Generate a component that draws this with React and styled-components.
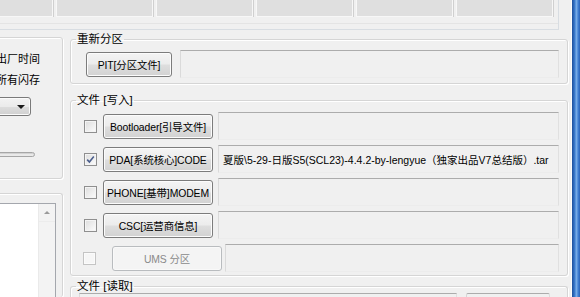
import React from 'react'
import styled, {createGlobalStyle} from 'styled-components'

const GlobalStyle = createGlobalStyle`
  html, body {
    margin: 0;
    padding: 0;
    background: #f0f0f0;
  }
  body {
    font-family: "Liberation Sans", "Noto Sans CJK SC", sans-serif;
    font-size: 11px;
    color: #000;
  }
`;

const Window = styled.div`
  width: 580px;
  height: 297px;
  display: flex;
  overflow: hidden;
  background: #f0f0f0;
`;

const Client = styled.div`
  flex: 1;
  min-width: 0;
  display: flex;
  flex-direction: column;
  border-right: 1px solid #fbfbfb;
`;

const Frame = styled.div`
  width: 8px;
  background: linear-gradient(to right, #1d4f9b 0%, #3574c8 30%, #78ade8 55%, #3d7bd0 80%, #2b62b4 100%);
`;

const PortPanel = styled.div`
  width: 559px;
  height: 30px;
  box-sizing: border-box;
  border-right: 1px solid #d8dde2;
  border-bottom: 1px solid #d8dde2;
`;

const PortStrip = styled.div`
  height: 24px;
  box-sizing: border-box;
  border-bottom: 1px solid #e4e4e4;
  display: flex;
  justify-content: flex-end;
  align-items: flex-start;
  gap: 3px;
  padding-right: 5px;
`;

const PortCell = styled.div`
  flex: 0 0 97px;
  height: 17px;
  box-sizing: border-box;
  background: #dfdfdf;
  border: 1px solid #f7f7f7;
  border-top: none;
  box-shadow: 1px 0 0 #d0d0d0;
`;

const Body = styled.div`
  flex: 1;
  display: flex;
  gap: 7px;
  min-height: 0;
`;

const LeftCol = styled.div`
  width: 63px;
  display: flex;
  flex-direction: column;
`;

const SideGroup = styled.div`
  margin-left: -10px;
  margin-top: ${p => p.$mt}px;
  height: ${p => p.$h ? `${p.$h}px` : 'auto'};
  flex: ${p => p.$grow ? 1 : 'none'};
  box-sizing: border-box;
  border: 1px solid #d5d5d5;
  border-bottom: ${p => p.$grow ? 'none' : '1px solid #d5d5d5'};
  border-radius: 3px;
  box-shadow: inset 1px 1px 0 #fff, 1px 1px 0 #fff;
  display: flex;
  flex-direction: column;
  align-items: flex-end;
`;

const SideLabel = styled.div`
  white-space: nowrap;
  font-size: 11px;
  line-height: 16px;
  margin-top: ${p => p.$mt}px;
  margin-right: 22px;
`;

const Combo = styled.div`
  width: 72px;
  height: 19px;
  margin-top: 9px;
  margin-right: 31px;
  box-sizing: border-box;
  border: 1px solid #7a7a7a;
  border-radius: 3px;
  background: linear-gradient(#f3f3f3 0%, #ebebeb 50%, #dddddd 51%, #d0d0d0 100%);
  box-shadow: inset 0 0 0 1px #fbfbfb;
  display: flex;
  align-items: center;
  justify-content: space-between;
  padding: 0 5px 0 34px;
  font-size: 11px;
`;

const ComboArrow = styled.span`
  width: 0;
  height: 0;
  border-left: 4px solid transparent;
  border-right: 4px solid transparent;
  border-top: 4px solid #1a1a1a;
`;

const Track = styled.div`
  width: 80px;
  height: 5px;
  margin-top: 36px;
  margin-right: 27px;
  box-sizing: border-box;
  border: 1px solid #a6a6a6;
  border-radius: 3px;
  background: #e9e9e9;
  box-shadow: inset 0 1px 0 #d2d2d2;
`;

const ListBox = styled.div`
  margin-top: 9px;
  margin-right: 6px;
  width: 70px;
  flex: 1;
  box-sizing: border-box;
  border: 1px solid #a4a7ad;
  border-bottom: none;
  background: #fff;
  display: flex;
  justify-content: flex-end;
`;

const ScrollBar = styled.div`
  width: 16px;
  background: #f3f3f3;
  border-left: 1px solid #eaeaea;
  display: flex;
  flex-direction: column;
`;

const ScrollUp = styled.div`
  height: 17px;
  display: flex;
  align-items: center;
  justify-content: center;
  border-bottom: 1px solid #ececec;
  &::after {
    content: "";
    border-left: 3px solid transparent;
    border-right: 3px solid transparent;
    border-bottom: 3px solid #9a9a9a;
  }
`;

const RightCol = styled.div`
  width: 498px;
  display: flex;
  flex-direction: column;
`;

const Group = styled.fieldset`
  margin: ${p => p.$mt}px 0 0 0;
  padding: 0;
  min-width: 0;
  border: 1px solid #d5d5d5;
  border-radius: 3px;
  box-shadow: inset 1px 1px 0 #fff, 1px 1px 0 #fff;
  flex: ${p => p.$grow ? 1 : 'none'};
  border-bottom: ${p => p.$grow ? 'none' : '1px solid #d5d5d5'};
`;

const Legend = styled.legend`
  margin-left: 5px;
  padding: 0 1px;
  font-size: 11.5px;
  line-height: 14px;
`;

const Rows = styled.div`
  display: flex;
  flex-direction: column;
  gap: 5px;
  padding: ${p => p.$pad};
`;

const Row = styled.div`
  height: 28px;
  display: flex;
  align-items: center;
`;

const Check = styled.span`
  width: 13px;
  height: 13px;
  flex: none;
  box-sizing: border-box;
  margin-left: ${p => p.$ml || 0}px;
  border: 1px solid ${p => p.$disabled ? '#c4c4c4' : '#8f8f8f'};
  background: ${p => p.$disabled
    ? '#f6f6f6'
    : 'linear-gradient(135deg, #dcdcdc 0%, #f3f3f3 70%, #fdfdfd 100%)'};
  box-shadow: inset 0 0 0 1px ${p => p.$disabled ? '#fbfbfb' : '#f4f4f4'};
  display: flex;
  align-items: center;
  justify-content: center;
`;

const Button = styled.div`
  width: ${p => p.$w}px;
  height: 25px;
  flex: none;
  margin-left: ${p => p.$ml}px;
  box-sizing: border-box;
  border: 1px solid ${p => p.$disabled ? '#b9bcbf' : '#7c7c7c'};
  border-radius: 3px;
  background: ${p => p.$disabled
    ? '#f4f4f4'
    : 'linear-gradient(#f4f4f4 0%, #ececec 48%, #dedede 52%, #d2d2d2 100%)'};
  box-shadow: inset 0 0 0 1px ${p => p.$disabled ? '#f9f9f9' : '#fcfcfc'};
  color: ${p => p.$disabled ? '#8a8a8a' : '#000'};
  display: flex;
  align-items: center;
  justify-content: center;
  white-space: nowrap;
  font-size: 10.4px;
  letter-spacing: -0.1px;
`;

const Field = styled.div`
  flex: 1;
  min-width: 0;
  height: 28px;
  margin-left: ${p => p.$ml}px;
  box-sizing: border-box;
  border: 1px solid;
  border-color: #acacac #e0e0e0 #ececec #dadada;
  background: #f0f0f0;
  display: flex;
  align-items: center;
  padding-left: 4px;
  white-space: nowrap;
  overflow: hidden;
  font-size: 10.5px;
`;

const ReadBox = styled.div`
  width: ${p => p.$w}px;
  height: 28px;
  flex: none;
  margin-left: ${p => p.$ml}px;
  box-sizing: border-box;
  border: 1px solid;
  border-color: #acacac #dcdcdc #e8e8e8 #d6d6d6;
  border-radius: 2px;
`;

const CheckMark = () => (
  <svg width="9" height="9" viewBox="0 0 9 9">
    <path d="M1.2 4.6 L3.4 7 L7.8 1.6" fill="none" stroke="#4b5e8c" strokeWidth="1.6"/>
  </svg>
);

const writeRows = [
  {id: 'bl', label: 'Bootloader[引导文件]', file: ''},
  {id: 'pda', label: 'PDA[系统核心]CODE', checked: true,
    file: '夏版\\5-29-日版S5(SCL23)-4.4.2-by-lengyue（独家出品V7总结版）.tar'},
  {id: 'phone', label: 'PHONE[基带]MODEM', file: ''},
  {id: 'csc', label: 'CSC[运营商信息]', file: ''},
  {id: 'ums', label: 'UMS 分区', file: '', disabled: true}
];

const App = () => {
  return (
    <>
      <GlobalStyle/>
      <Window>
        <Client>
          <PortPanel>
            <PortStrip>
              {[0, 1, 2, 3, 4, 5].map(i => <PortCell key={i}/>)}
            </PortStrip>
          </PortPanel>
          <Body>
            <LeftCol>
              <SideGroup $mt={7} $h={142}>
                <SideLabel $mt={13}>重置出厂时间</SideLabel>
                <SideLabel $mt={5}>擦除所有闪存</SideLabel>
                <Combo><span>-</span><ComboArrow/></Combo>
                <Track/>
              </SideGroup>
              <SideGroup $mt={14} $grow>
                <ListBox>
                  <ScrollBar>
                    <ScrollUp/>
                  </ScrollBar>
                </ListBox>
              </SideGroup>
            </LeftCol>
            <RightCol>
              <Group $mt={2}>
                <Legend>重新分区</Legend>
                <Rows $pad="4px 8px 5px 15px">
                  <Row>
                    <Button $w={86} $ml={0}>PIT[分区文件]</Button>
                    <Field $ml={8}/>
                  </Row>
                </Rows>
              </Group>
              <Group $mt={9}>
                <Legend>文件 [写入]</Legend>
                <Rows $pad="5px 8px 3px 13px">
                  {writeRows.map(r => (
                    <Row key={r.id}>
                      <Check $disabled={r.disabled} $ml={r.disabled ? -1 : 0}>
                        {r.checked && <CheckMark/>}
                      </Check>
                      <Button $w={110} $ml={r.disabled ? 16 : 6} $disabled={r.disabled}>
                        {r.label}
                      </Button>
                      <Field $ml={r.disabled ? 3 : 5}>{r.file}</Field>
                    </Row>
                  ))}
                </Rows>
              </Group>
              <Group $mt={3} $grow>
                <Legend>文件 [读取]</Legend>
                <Rows $pad="0 17px 0 8px">
                  <Row>
                    <Field $ml={0}/>
                    <ReadBox $w={84} $ml={9}/>
                  </Row>
                </Rows>
              </Group>
            </RightCol>
          </Body>
        </Client>
        <Frame/>
      </Window>
    </>
  );
};

export default App
